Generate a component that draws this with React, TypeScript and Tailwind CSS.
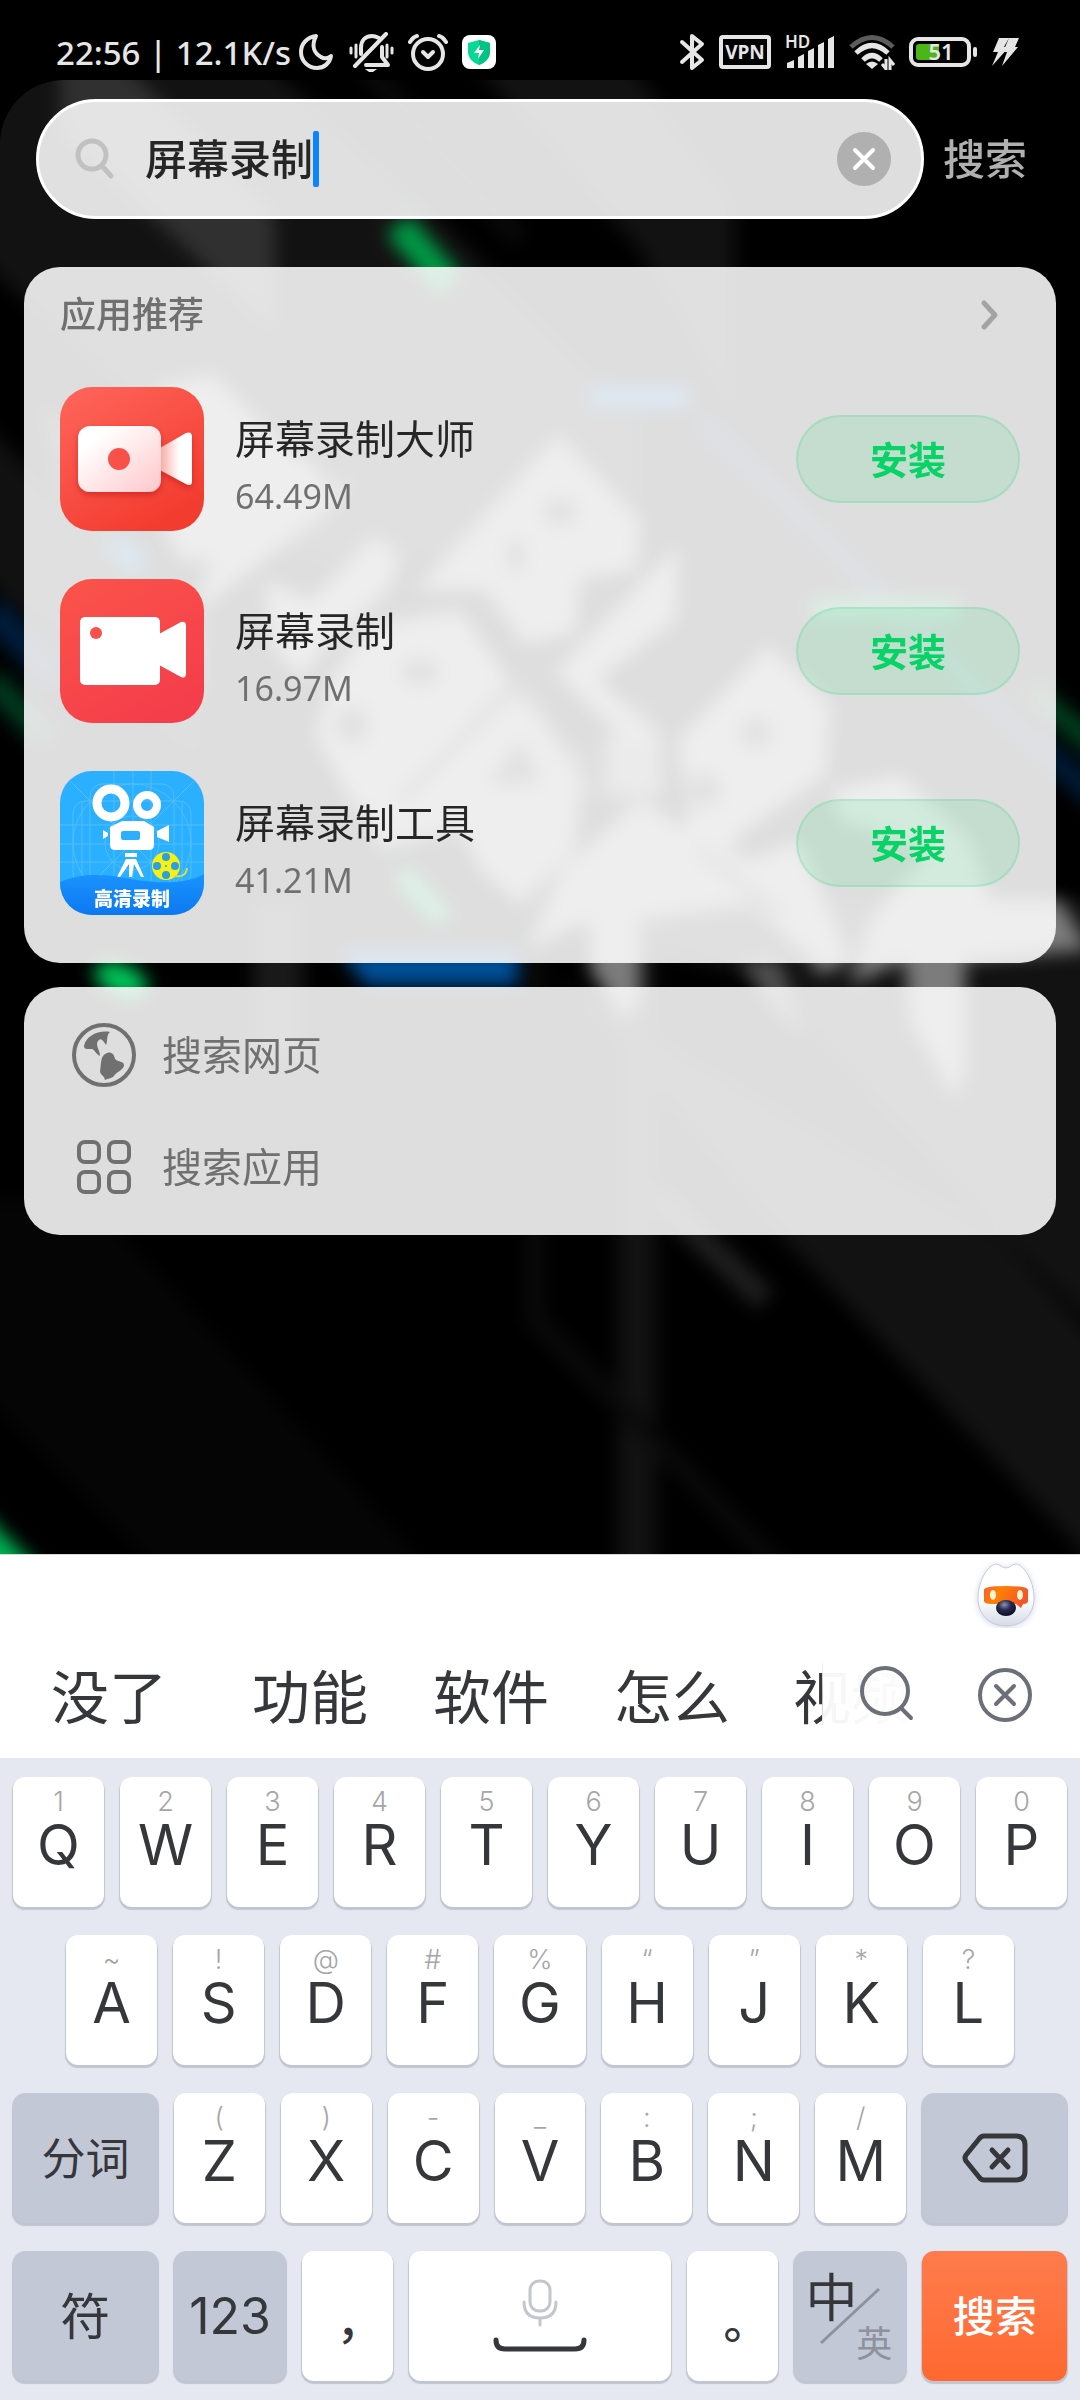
import { useState } from "react";
import type { ReactNode } from "react";

type KeyDef = { label: string; hint: string };

const row1: KeyDef[] = [
  { label: "Q", hint: "1" },
  { label: "W", hint: "2" },
  { label: "E", hint: "3" },
  { label: "R", hint: "4" },
  { label: "T", hint: "5" },
  { label: "Y", hint: "6" },
  { label: "U", hint: "7" },
  { label: "I", hint: "8" },
  { label: "O", hint: "9" },
  { label: "P", hint: "0" },
];
const row2: KeyDef[] = [
  { label: "A", hint: "~" },
  { label: "S", hint: "!" },
  { label: "D", hint: "@" },
  { label: "F", hint: "#" },
  { label: "G", hint: "%" },
  { label: "H", hint: "“" },
  { label: "J", hint: "”" },
  { label: "K", hint: "*" },
  { label: "L", hint: "?" },
];
const row3: KeyDef[] = [
  { label: "Z", hint: "(" },
  { label: "X", hint: ")" },
  { label: "C", hint: "-" },
  { label: "V", hint: "_" },
  { label: "B", hint: ":" },
  { label: "N", hint: ";" },
  { label: "M", hint: "/" },
];

/* ---------- wallpaper ---------- */

function Wallpaper() {
  return (
    <svg
      className="absolute inset-0 h-full w-full"
      viewBox="0 80 1080 1474"
      preserveAspectRatio="xMidYMin slice"
      aria-hidden="true"
    >
      <defs>
        <filter id="soft" x="-10%" y="-10%" width="120%" height="120%" colorInterpolationFilters="sRGB">
          <feGaussianBlur stdDeviation="9" />
        </filter>
        <filter id="letters" x="-10%" y="-10%" width="120%" height="120%" colorInterpolationFilters="sRGB">
          <feGaussianBlur stdDeviation="9" />
        </filter>
      </defs>
      <rect y="80" width="1080" height="1474" fill="#000" />
      <g filter="url(#soft)">
        <path d="M-40 40H240L420 200L640 420V560L300 560L-40 240Z" fill="#121212" />
        <path d="M-40 400L200 640V760L-40 560Z" fill="#111" />
        <path d="M60 50H110L275 215V330L230 290L60 130Z" fill="#303030" />
        <path d="M540 60H625L735 200V420L640 250L470 60Z" fill="#121212" />
        <path d="M360 60L520 240" stroke="#0c0c0c" strokeWidth="16" />
        <path d="M398 225L450 285" stroke="#009a46" strokeWidth="30" />
        <path d="M-10 610L60 680" stroke="#001d3c" strokeWidth="30" />
        <path d="M-10 680L50 740" stroke="#00391f" strokeWidth="26" />
        <path d="M1030 690L1100 750" stroke="#00401f" strokeWidth="22" />
        <path d="M1030 740L1100 800" stroke="#001a35" strokeWidth="26" />
        <path d="M700 420L1030 740" stroke="#001a35" strokeWidth="22" />
        <path d="M500 900H1100V1330L980 1215L760 980Z" fill="#121212" />
        <path d="M560 980L1000 1235L1100 1345V1570L780 1235Z" fill="#121212" />
        <path d="M640 1180L765 1300" stroke="#1f1f1f" strokeWidth="24" />
        <path d="M637 700V1580" stroke="#121212" strokeWidth="38" />
        <path d="M535 700V1320L630 1415L790 1580" stroke="#0a0a0a" strokeWidth="18" fill="none" />
        <path d="M-20 1200H90L430 1570H160L-20 1390Z" fill="#050505" />
        <path d="M278 900V1060" stroke="#191919" strokeWidth="50" />
        <ellipse cx="121" cy="980" rx="28" ry="16" fill="#00c65a" transform="rotate(24 121 980)" />
        <path d="M340 950H518V986H366Z" fill="#004f98" />
        <path d="M-20 1510L45 1575H-20Z" fill="#00b053" />
        <path d="M590 397H690" stroke="#0058b0" strokeWidth="20" />
        <path d="M115 540L140 570" stroke="#005890" strokeWidth="26" />
        <path d="M810 608H960" stroke="#008040" strokeWidth="20" />
        <path d="M400 872L445 920" stroke="#00a850" strokeWidth="20" />
      </g>
      <g filter="url(#letters)" fill="#7c7c7c" stroke="none">
        <path d="M160 385L215 375L262 425L330 480L300 500L350 480L330 510L200 610V700L175 680L210 560L180 560L160 520Z" />
        <path d="M40 400L90 440L120 560L60 500Z" opacity=".3" />
        <path d="M265 580L310 600L375 535L400 555L390 590L330 640L300 680L270 640Z" />
        <path d="M415 590L558 435L640 520L636 570L580 580L576 632L525 645L485 590Z" />
        <path d="M678 545L676 620L598 680L660 735L630 745L555 672Z" />
        <path d="M315 735L330 680L370 625L460 610L510 680L400 800L355 810Z" />
        <path d="M360 800L430 770L508 685L585 760L575 850L520 905L480 870L460 830L380 850Z" />
        <path d="M604 736H662V796H604Z" opacity=".8" />
        <path d="M768 645L830 705L826 775L740 835L720 870L640 900L620 880L690 820L678 740Z" />
        <path d="M528 950L560 870L640 800L720 850L790 870L840 940L800 950L750 905L640 920V1000L625 1020L590 970V920Z" />
        <path d="M740 960L780 960L805 1040L765 1000Z" opacity=".6" />
        <path d="M830 790L900 775L970 840L990 900H1060L1090 950L965 960V1070L955 1100L910 1020L905 960L850 985L870 920L930 850L840 820Z" />
        <path d="M750 860L800 840L850 960L820 975Z" />
        <g fill="#1c1c1c">
          <ellipse cx="560" cy="512" rx="16" ry="13" />
          <ellipse cx="516" cy="556" rx="9" ry="16" />
          <ellipse cx="420" cy="672" rx="18" ry="13" />
          <ellipse cx="352" cy="725" rx="16" ry="18" />
          <path d="M488 784L522 740L540 782Z" />
          <ellipse cx="756" cy="733" rx="15" ry="14" />
          <ellipse cx="704" cy="790" rx="16" ry="16" />
        </g>
        <path d="M512 690L400 800M520 680L600 800M700 850L780 915" fill="none" stroke="#2c2c2c" strokeWidth="9" />
      </g>
    </svg>
  );
}

/* ---------- status bar ---------- */

function StatusBar() {
  return (
    <header className="flex h-20 items-center bg-black pt-[24px] pr-[61px] pl-[56px] text-[#e6e6e6]">
      <span className="text-[33px] leading-none font-medium whitespace-nowrap">22:56 | 12.1K/s</span>
      <div className="ml-[7px] flex items-center gap-[14px]">
        <svg width="36" height="38" viewBox="0 0 36 38" fill="none" stroke="currentColor" strokeWidth="4" strokeLinejoin="round">
          <path d="M18 3C9 4 3 11 3 19C3 28 10 35 19 35C26 35 32 30 33 23C29 26 26 26 23 24C16 20 13 13 18 3Z" />
        </svg>
        <svg width="46" height="40" viewBox="0 0 46 40" fill="none" stroke="currentColor" strokeWidth="4" strokeLinecap="round">
          <path d="M13 22V16C13 9 17 4 24 4C27 4 29 5 31 6" />
          <path d="M38 2L7 34" />
          <path d="M18 33H40L34 25V15" strokeLinejoin="round" />
          <path d="M17 37H29L25 40H21Z" fill="currentColor" stroke="none" />
          <path d="M3 16V21M8 13V25M39 13V25M44 16V21" strokeWidth="3" />
        </svg>
        <svg width="40" height="38" viewBox="0 0 40 38" fill="none" stroke="currentColor" strokeWidth="4" strokeLinecap="round" strokeLinejoin="round">
          <circle cx="20" cy="21" r="15" />
          <path d="M15 19L20 24L25 19" />
          <path d="M2 9Q5 4 9 3M38 9Q35 4 31 3" />
        </svg>
        <svg width="34" height="34" viewBox="0 0 34 34">
          <rect width="34" height="34" rx="8" fill="#fff" />
          <path d="M17 5L28 8V17C28 23 23 28 17 30C11 28 6 23 6 17V8Z" fill="#08d893" />
          <path d="M17 5L28 8V17C28 23 23 28 17 30Z" fill="#02c384" />
          <path d="M18 10L12 18H17L16 24L22 15H17Z" fill="#fff" />
        </svg>
      </div>
      <div className="ml-auto flex items-center gap-[14px]">
        <svg width="26" height="40" viewBox="0 0 26 40" fill="none" stroke="currentColor" strokeWidth="4" strokeLinecap="round" strokeLinejoin="round">
          <path d="M3 10L23 28L13 36V4L23 12L3 30" />
        </svg>
        <span className="flex h-[34px] w-[52px] items-center justify-center rounded-[4px] border-4 border-current text-[19px] leading-none font-bold">
          VPN
        </span>
        <span className="relative h-[34px] w-[50px]">
          <span className="absolute top-0 left-0 text-[17px] leading-[14px] font-semibold">HD</span>
          <svg className="absolute inset-0" width="50" height="34" viewBox="0 0 50 34" fill="currentColor">
            <path d="M2 33V28L9 25V33ZM13 33V22L19 19V33ZM23 33V16L29 13V33ZM33 33V10L39 7V33ZM43 33V4L49 1V33Z" />
          </svg>
        </span>
        <svg width="46" height="36" viewBox="0 0 46 36" fill="none" stroke="currentColor" strokeWidth="5">
          <path d="M2 13Q23 -6 44 13" stroke="#5c5c5c" />
          <path d="M7 19Q23 4 39 19" />
          <path d="M14 26Q23 17 32 26" />
          <path d="M23 35L17 30Q23 25 29 30Z" fill="currentColor" stroke="none" />
          <path d="M37 25V35L33 30M41 36V26L45 31" strokeWidth="3" />
        </svg>
        <svg width="68" height="32" viewBox="0 0 68 32" fill="none">
          <rect x="2" y="3" width="58" height="26" rx="7" stroke="currentColor" strokeWidth="4" />
          <rect x="7" y="8" width="23" height="16" rx="3" fill="#4cb518" />
          <rect x="64" y="11" width="4" height="10" rx="2" fill="currentColor" />
          <text x="32" y="24" textAnchor="middle" fontSize="22" fontWeight="600" fill="currentColor">
            51
          </text>
        </svg>
        <svg width="28" height="32" viewBox="0 0 28 32" fill="currentColor">
          <path d="M8 2H18L13 11H18L1 30L7 16H2ZM18 2H28L24 11H27L11 30L16 16H12Z" />
        </svg>
      </div>
    </header>
  );
}

/* ---------- app icons ---------- */

function MasterIcon() {
  return (
    <svg className="size-36 shrink-0 rounded-[32px]" viewBox="0 0 144 144" aria-hidden="true">
      <defs>
        <linearGradient id="m1" x1="0" y1="0" x2=".6" y2="1">
          <stop offset="0" stopColor="#ff665c" />
          <stop offset="1" stopColor="#f33c30" />
        </linearGradient>
        <linearGradient id="m2" x1="0" y1="0" x2="1" y2="1">
          <stop offset=".2" stopColor="#fff" />
          <stop offset="1" stopColor="#ffc6ca" />
        </linearGradient>
        <linearGradient id="m3" x1="0" y1="0" x2="1" y2="0">
          <stop offset="0" stopColor="#f8a9a4" />
          <stop offset=".6" stopColor="#fff" />
        </linearGradient>
        <filter id="m4" x="-20%" y="-20%" width="140%" height="150%">
          <feDropShadow dx="0" dy="3" stdDeviation="3" floodColor="#a01008" floodOpacity=".4" />
        </filter>
      </defs>
      <rect width="144" height="144" fill="url(#m1)" />
      <g filter="url(#m4)">
        <path d="M100 61L126 46Q132 44 132 50V94Q132 100 126 97L100 83Z" fill="url(#m3)" />
        <rect x="18" y="39" width="83" height="66" rx="12" fill="url(#m2)" />
      </g>
      <circle cx="59" cy="72" r="11" fill="#f9504a" />
    </svg>
  );
}

function RecorderIcon() {
  return (
    <svg className="size-36 shrink-0 rounded-[32px]" viewBox="0 0 144 144" aria-hidden="true">
      <defs>
        <linearGradient id="r1" x1="0" y1="0" x2=".6" y2="1">
          <stop offset="0" stopColor="#fa544a" />
          <stop offset="1" stopColor="#f53e4b" />
        </linearGradient>
      </defs>
      <rect width="144" height="144" fill="url(#r1)" />
      <rect x="20" y="38" width="80" height="68" rx="5" fill="#fff" />
      <path d="M99 55L121 43Q126 42 126 47V94Q126 100 121 98L99 86Z" fill="#fff" />
      <circle cx="36" cy="54" r="6" fill="#f9504c" />
    </svg>
  );
}

function ToolIcon() {
  return (
    <svg className="size-36 shrink-0 rounded-[32px]" viewBox="0 0 144 144" aria-hidden="true">
      <defs>
        <linearGradient id="t1" x1="0" y1="0" x2="0" y2="1">
          <stop offset="0" stopColor="#1a93ff" />
          <stop offset="1" stopColor="#0c78f0" />
        </linearGradient>
      </defs>
      <rect width="144" height="144" fill="#2bafff" />
      <g fill="none" stroke="#6cc8ff" strokeWidth="1" opacity=".6">
        <path d="M54 0V110M73 0V110M91 0V110M0 54H144M0 73H144M0 91H144M0 0L144 144M144 0L0 144M22 30V110M122 30V110" />
        <circle cx="72" cy="72" r="59" />
        <circle cx="72" cy="72" r="27" />
        <rect x="13" y="30" width="118" height="84" rx="12" />
        <rect x="30" y="13" width="84" height="118" rx="12" />
      </g>
      <g fill="none" stroke="#fff">
        <circle cx="51" cy="32" r="14" strokeWidth="9" />
        <circle cx="87" cy="34" r="10" strokeWidth="8" />
      </g>
      <path d="M50 56L62 50H84L94 56V74Q94 79 89 79H55Q50 79 50 74Z" fill="#fff" />
      <rect x="61" y="60" width="19" height="9" rx="2" fill="#2bafff" />
      <path d="M97 60L109 54V71L97 66ZM43 59L48 62V65L43 68ZM65 82H77V86H65ZM66 88H76L84 106H81L74 93L72 106H69L69 93L60 106H57Z" fill="#fff" />
      <circle cx="106" cy="95" r="14" fill="#f6f112" />
      <g fill="#2b9fe0">
        <circle cx="106" cy="86" r="4" />
        <circle cx="106" cy="104" r="4" />
        <circle cx="97" cy="95" r="4" />
        <circle cx="115" cy="95" r="4" />
        <circle cx="106" cy="95" r="1" />
      </g>
      <path d="M114 105Q126 107 127 97" fill="none" stroke="#d8e03a" strokeWidth="2" />
      <path d="M0 111C30 98 60 106 84 110C110 113 130 111 144 103V144H0Z" fill="url(#t1)" />
      <text x="72" y="135" textAnchor="middle" fontSize="19" fontWeight="900" fill="#fff">
        高清录制
      </text>
    </svg>
  );
}

/* ---------- search area ---------- */

function AppRow({ icon, name, size }: { icon: ReactNode; name: string; size: string }) {
  return (
    <li className="flex h-48 items-center">
      {icon}
      <div className="ml-[31px] flex-1 pt-[18px]">
        <h3 className="text-[40px] leading-[56px] text-[#262626]">{name}</h3>
        <p className="text-[34px] leading-[58px] text-[#707070]">{size}</p>
      </div>
      <button
        type="button"
        aria-label={`安装 ${name}`}
        className="h-[88px] w-[224px] rounded-full border-2 border-[#07d366]/15 bg-[#07d366]/12 text-[38px] leading-none font-bold text-[#07d366]"
      >
        安装
      </button>
    </li>
  );
}

function SearchArea() {
  const [query, setQuery] = useState("屏幕录制");
  return (
    <main className="relative flex-1 overflow-hidden rounded-t-[64px] bg-black">
      <Wallpaper />
      <div className="relative px-6 pt-[19px]">
        <form className="ml-3 flex items-center" onSubmit={(e) => e.preventDefault()}>
          <div className="flex h-[120px] flex-1 items-center rounded-full border-[3px] border-white bg-white/87 pr-[30px] pl-9">
            <svg width="40" height="42" viewBox="0 0 40 42" fill="none" stroke="#c1c1c1" strokeWidth="5" strokeLinecap="round">
              <circle cx="17" cy="17" r="14" />
              <path d="M27 28L36 38" />
            </svg>
            <input
              type="text"
              aria-label="搜索内容"
              value={query}
              onChange={(e) => setQuery(e.target.value)}
              className="ml-[30px] field-sizing-content bg-transparent text-[42px] leading-[60px] font-medium text-[#262626] caret-transparent outline-none"
            />
            <span className="h-14 w-[6px] rounded-xs bg-[#0d84ff]" />
            <button
              type="button"
              aria-label="清除"
              onClick={() => setQuery("")}
              className="ml-auto flex size-[54px] items-center justify-center rounded-full bg-[#b0b0b0]"
            >
              <svg width="24" height="24" viewBox="0 0 24 24" stroke="#fff" strokeWidth="4" strokeLinecap="round">
                <path d="M3 3L21 21M21 3L3 21" />
              </svg>
            </button>
          </div>
          <button type="submit" className="mx-[19px] mr-[29px] text-[42px] leading-none font-medium text-[#b0b0b0]">
            搜索
          </button>
        </form>

        <section className="mt-12 rounded-[36px] bg-white/87 px-9 pb-6">
          <div className="flex h-24 items-center justify-between">
            <h2 className="text-[36px] leading-none font-medium text-[#707070]">应用推荐</h2>
            <button type="button" aria-label="更多" className="mr-5">
              <svg width="20" height="32" viewBox="0 0 20 32" fill="none" stroke="#a3a3a3" strokeWidth="5" strokeLinecap="round" strokeLinejoin="round">
                <path d="M4 4L15 16L4 28" />
              </svg>
            </button>
          </div>
          <ul>
            <AppRow icon={<MasterIcon />} name="屏幕录制大师" size="64.49M" />
            <AppRow icon={<RecorderIcon />} name="屏幕录制" size="16.97M" />
            <AppRow icon={<ToolIcon />} name="屏幕录制工具" size="41.21M" />
          </ul>
        </section>

        <section className="mt-6 rounded-[36px] bg-white/87 px-12 py-3 text-[40px] leading-none text-[#707070]">
          <button type="button" className="flex h-28 w-full items-center gap-[26px]">
            <svg width="64" height="64" viewBox="0 0 64 64" fill="none">
              <circle cx="32" cy="32" r="30" stroke="currentColor" strokeWidth="4" />
              <path
                d="M38 9C26 7 14 13 12 23C12 27 17 26 20 26C23 27 24 31 28 33C28 27 23 22 26 18C29 14 31 17 34 22C36 18 34 12 38 9Z"
                fill="currentColor"
              />
              <path
                d="M33 31C37 28 42 29 43 36C46 39 52 38 52 42C52 47 44 49 42 53C39 56 36 55 33 57C32 52 28 52 28 48C29 44 28 34 33 31Z"
                fill="currentColor"
              />
            </svg>
            搜索网页
          </button>
          <button type="button" className="flex h-28 w-full items-center gap-[26px]">
            <svg width="64" height="64" viewBox="0 0 64 64" fill="none" stroke="currentColor" strokeWidth="4">
              <rect x="7" y="7" width="20" height="20" rx="6" />
              <rect x="37" y="7" width="20" height="20" rx="6" />
              <rect x="7" y="37" width="20" height="20" rx="6" />
              <rect x="37" y="37" width="20" height="20" rx="6" />
            </svg>
            搜索应用
          </button>
        </section>
      </div>
    </main>
  );
}

/* ---------- keyboard ---------- */

function Mascot() {
  return (
    <svg width="72" height="76" viewBox="-8 -4 72 76" aria-hidden="true">
      <defs>
        <linearGradient id="k1" x1="0" y1="0" x2="0" y2="1">
          <stop offset=".55" stopColor="#fff" />
          <stop offset="1" stopColor="#d5dbe6" />
        </linearGradient>
        <linearGradient id="k2" x1="0" y1="0" x2="1" y2=".3">
          <stop offset="0" stopColor="#f5602a" />
          <stop offset=".4" stopColor="#ff8006" />
          <stop offset="1" stopColor="#f4552a" />
        </linearGradient>
        <radialGradient id="k3" cx=".42" cy=".3" r=".7">
          <stop offset="0" stopColor="#8d92b8" />
          <stop offset=".45" stopColor="#292c50" />
          <stop offset="1" stopColor="#0a0b20" />
        </radialGradient>
        <filter id="k4" x="-20%" y="-20%" width="140%" height="140%">
          <feDropShadow dx="0" dy="1" stdDeviation="3" floodColor="#8c9bd0" floodOpacity=".4" />
        </filter>
      </defs>
      <path
        d="M28 5C24 5 22 1 18 1C10 2 0 18 0 35C0 52 12 63 28 63C44 63 56 52 56 35C56 18 46 2 38 1C34 1 32 5 28 5Z"
        fill="url(#k1)"
        stroke="#c5cad8"
        strokeWidth="1"
        filter="url(#k4)"
      />
      <path d="M6 27Q6 23 28 23Q50 23 50 27V38Q50 41 45 41L43 45L38 41H14Q6 41 6 38Z" fill="url(#k2)" />
      <ellipse cx="15" cy="32" rx="3" ry="5" fill="#fff6cf" />
      <ellipse cx="42" cy="32" rx="3" ry="5" fill="#fff6cf" />
      <ellipse cx="28" cy="45" rx="10" ry="8" fill="url(#k3)" />
    </svg>
  );
}

const shadow = "shadow-[0_2px_1px_1px_#c0c5d1]";

function LetterKey({ label, hint }: KeyDef) {
  return (
    <button
      type="button"
      className={`${shadow} flex grow-[91] basis-0 flex-col items-center rounded-[12px] bg-white pt-[10px] font-['Inter','Noto_Sans_CJK_SC',sans-serif] text-[#36373b]`}
    >
      <span className="h-[30px] text-[27px] leading-[30px] font-light text-[#a6a6a6]">{hint}</span>
      <span className="text-[56px] leading-[56px]">{label}</span>
    </button>
  );
}

function Keyboard() {
  const dark = `${shadow} rounded-[12px] bg-[#c2c8d6] flex items-center justify-center basis-0`;
  const light = `${shadow} rounded-[12px] bg-white flex items-center justify-center basis-0`;
  return (
    <section aria-label="键盘" className="bg-[#e5e8f0] text-[#36373b]">
      <div className="border-t border-[#d8d8d8] bg-white">
        <div className="flex h-[73px] justify-end pt-1 pr-[38px]">
          <button type="button" aria-label="助手">
            <Mascot />
          </button>
        </div>
        <div className="relative h-[130px] overflow-hidden">
          <div className="flex h-full items-center pt-2 pl-[51px] text-[58px] leading-none whitespace-nowrap">
            <button type="button" className="mr-[85px]">没了</button>
            <button type="button" className="mr-[65px]">功能</button>
            <button type="button" className="mr-[65px]">软件</button>
            <button type="button" className="mr-[63px]">怎么</button>
            <button type="button">视频</button>
          </div>
          <div className="absolute inset-y-0 right-0 flex w-[258px] items-start justify-between bg-linear-to-r from-white/95 via-white/98 via-30% to-white to-35% pr-[47px] pl-[36px] text-[#6b6f78]">
            <span className="absolute top-[31px] left-0 h-[72px] w-px bg-linear-to-b from-transparent via-[#b8b8b8] to-transparent" />
            <button type="button" aria-label="搜索候选词" className="pt-[37px]">
              <svg width="56" height="56" viewBox="0 0 56 56" fill="none" stroke="currentColor" strokeWidth="4" strokeLinecap="round">
                <circle cx="27" cy="26" r="23" />
                <path d="M43 43L53 53" />
              </svg>
            </button>
            <button type="button" aria-label="关闭候选词" className="pt-[39px]">
              <svg width="56" height="56" viewBox="0 0 56 56" fill="none" stroke="currentColor" strokeWidth="4" strokeLinecap="round">
                <circle cx="28" cy="28" r="25" />
                <path d="M19 19L37 37M37 19L19 37" />
              </svg>
            </button>
          </div>
        </div>
      </div>

      <div className="flex flex-col gap-7 px-[13px] py-[19px]">
        <div className="flex h-[130px] gap-4">
          {row1.map((k) => (
            <LetterKey key={k.label} {...k} />
          ))}
        </div>
        <div className="flex h-[130px] gap-4 px-[53px]">
          {row2.map((k) => (
            <LetterKey key={k.label} {...k} />
          ))}
        </div>
        <div className="flex h-[130px] gap-4">
          <button type="button" className={`${dark} grow-[145] text-[44px] leading-none`}>
            分词
          </button>
          {row3.map((k) => (
            <LetterKey key={k.label} {...k} />
          ))}
          <button type="button" aria-label="删除" className={`${dark} grow-[145]`}>
            <svg width="66" height="50" viewBox="0 0 66 50" fill="none" stroke="currentColor" strokeWidth="5" strokeLinecap="round" strokeLinejoin="round">
              <path d="M22 3H54Q63 3 63 12V38Q63 47 54 47H22Q19 47 17 44L4 28Q2 25 4 22L17 6Q19 3 22 3Z" />
              <path d="M30 17L46 34M46 17L30 34" />
            </svg>
          </button>
        </div>
        <div className="flex h-[130px] gap-4">
          <button type="button" className={`${dark} grow-[145] text-[50px] leading-none`}>
            符
          </button>
          <button type="button" className={`${dark} grow-[113] font-['Inter',sans-serif] text-[50px] leading-none`}>
            123
          </button>
          <button
            type="button"
            className={`${light} grow-[91] pt-8 font-['Noto_Sans_CJK_TC',sans-serif] text-[46px] leading-none font-medium`}
          >
            ，
          </button>
          <button type="button" aria-label="空格" className={`${light} grow-[262]`}>
            <svg width="96" height="78" viewBox="0 0 96 78" fill="none" strokeLinecap="round">
              <g stroke="#c3c6cf" strokeWidth="3">
                <rect x="38" y="4" width="20" height="30" rx="9" />
                <path d="M32 25Q32 41 48 41Q64 41 64 25M48 41V48" />
              </g>
              <path d="M4 63Q4 72 13 72H83Q92 72 92 63" stroke="#36373b" strokeWidth="5" />
            </svg>
          </button>
          <button
            type="button"
            className={`${light} grow-[91] pt-8 font-['Noto_Sans_CJK_TC',sans-serif] text-[46px] leading-none font-medium`}
          >
            。
          </button>
          <button type="button" aria-label="中英切换" className={`${dark} relative grow-[113]`}>
            <svg width="64" height="60" viewBox="0 0 64 60" stroke="#8e929e" strokeWidth="3">
              <path d="M3 57L61 3" />
            </svg>
            <span className="absolute top-[18px] left-3 text-[52px] leading-[56px]">中</span>
            <span className="absolute right-[14px] bottom-[17px] text-[36px] leading-[40px] text-[#8e929e]">英</span>
          </button>
          <button
            type="button"
            className={`${shadow} grow-[145] basis-0 rounded-[12px] bg-linear-to-b from-[#ff7c4c] to-[#ff6830] text-[42px] leading-none font-medium text-white`}
          >
            搜索
          </button>
        </div>
      </div>
    </section>
  );
}

export default function App() {
  return (
    <div className="flex min-h-screen flex-col bg-black font-['Noto_Sans','Noto_Sans_CJK_SC',sans-serif]">
      <StatusBar />
      <SearchArea />
      <Keyboard />
    </div>
  );
}
